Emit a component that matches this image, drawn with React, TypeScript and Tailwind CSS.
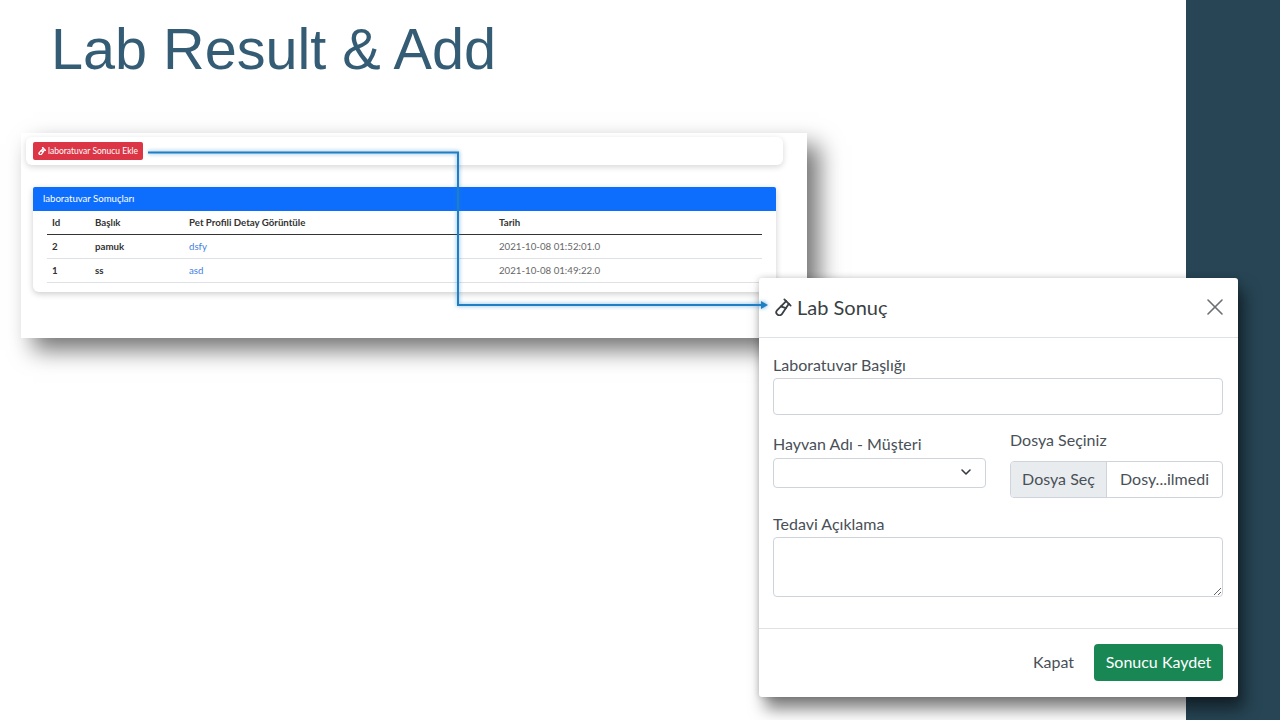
import { X, ChevronDown } from "lucide-react";

const rows = [
  { id: 2, title: "pamuk", link: "dsfy", date: "2021-10-08 01:52:01.0" },
  { id: 1, title: "ss", link: "asd", date: "2021-10-08 01:49:22.0" },
];

// tilted test tube, the picture's icon is not in lucide at this shape
const TubeIcon = ({ size, solid }: { size: number; solid?: boolean }) => {
  return (
    <svg width={size} height={size} viewBox="0 0 20 20" fill="none" stroke="currentColor" strokeWidth={solid ? 3.4 : 2} strokeLinecap="round" strokeLinejoin="round">
      <path d="M11.5 1.5L18.5 8.5" />
      <path d="M13.5 3.5L3.6 13.4a3.4 3.4 0 0 0 4.9 4.9L16.5 6.5" />
      <path d="M7.6 9.4L13.2 11.2" />
    </svg>
  );
};

const AppShot = () => {
  return (
    <div className="absolute left-[21px] top-[133px] h-[205px] w-[786px] bg-white pl-[5px] pr-[24px] pt-[4px] shadow-[12px_12px_22px_rgba(0,0,0,0.55)]">
      <div className="h-[28px] rounded-[6px] bg-white pl-[7px] pt-[5px] shadow-[0_2px_6px_rgba(0,0,0,0.16)]">
        <button className="flex h-[18px] w-[110px] items-center justify-center gap-[2px] rounded-[2px] bg-[#dc3545] text-[8.5px] text-white">
          <TubeIcon size={8} solid />
          laboratuvar Sonucu Ekle
        </button>
      </div>
      <div className="mx-[7px] mt-[22px] h-[105px] overflow-hidden rounded-b-[6px] rounded-t-[2px] bg-white shadow-[0_2px_6px_rgba(0,0,0,0.2)]">
        <div className="flex h-[24px] items-center bg-[#0d6efd] pl-[10px] text-[9.6px] text-white">
          laboratuvar Somuçları
        </div>
        <div className="px-[14px]">
          <table className="w-full table-fixed text-[9.7px] text-[#333]">
            <thead>
              <tr className="h-[23px] border-b border-[#333]">
                <th className="w-[48px] pl-[5px] text-left font-bold">Id</th>
                <th className="w-[94px] text-left font-bold">Başlık</th>
                <th className="w-[310px] text-left font-bold">Pet Profili Detay Görüntüle</th>
                <th className="text-left font-bold">Tarih</th>
              </tr>
            </thead>
            <tbody>
              {rows.map((r) => (
                <tr key={r.id} className="h-[24px] border-b border-[#dee2e6]">
                  <td className="pl-[5px] font-bold">{r.id}</td>
                  <td className="font-bold">{r.title}</td>
                  <td className="text-[#3f7fe0]">{r.link}</td>
                  <td className="text-[#666]">{r.date}</td>
                </tr>
              ))}
            </tbody>
          </table>
        </div>
      </div>
    </div>
  );
};

const Connector = () => {
  return (
    <svg className="absolute left-[140px] top-[140px] drop-shadow-[0_0_2px_rgba(31,127,196,0.7)]" width="640" height="180" viewBox="140 140 640 180" fill="none">
      <path d="M148 152.5H458V305H762" stroke="#1f7fc4" strokeWidth="2" />
      <path d="M761 301L768 305L761 309Z" fill="#1f7fc4" />
    </svg>
  );
};

const Modal = () => {
  return (
    <div className="absolute left-[759px] top-[278px] flex h-[419px] w-[479px] flex-col rounded-[3px] bg-white text-[16px] text-[#495057] shadow-[6px_12px_16px_rgba(0,0,0,0.5),0_0_6px_rgba(0,0,0,0.2)]">
      <div className="flex h-[60px] items-center justify-between border-b border-[#dee2e6] pb-[2px] pl-[15px] pr-[9px]">
        <div className="flex items-center gap-[5px] text-[20px] leading-[24px] text-[#3a3f44]">
          <TubeIcon size={18} />
          Lab Sonuç
        </div>
        <X size={28} strokeWidth={1.4} className="text-[#6c7075]" />
      </div>
      <div className="flex-1 pl-[14px] pr-[15px] pt-[17px]">
        <label className="mb-[1px] block h-[22px] leading-[20px]">Laboratuvar Başlığı</label>
        <input className="block h-[37px] w-full rounded-[4px] border border-[#ced4da] bg-white" />
        <div className="mt-[15px] grid grid-cols-2 gap-[24px]">
          <div className="pt-[4px]">
            <label className="mb-[2px] block h-[22px] leading-[20px]">Hayvan Adı - Müşteri</label>
            <div className="relative">
              <select className="block h-[30px] w-full appearance-none rounded-[4px] border border-[#ced4da] bg-white" />
              <ChevronDown size={16} strokeWidth={2.4} className="absolute right-[12px] top-[6px] text-[#343a40]" />
            </div>
          </div>
          <div>
            <label className="mb-[9px] block h-[22px] leading-[20px]">Dosya Seçiniz</label>
            <div className="flex h-[37px] overflow-hidden rounded-[4px] border border-[#ced4da]">
              <div className="flex w-[96px] items-center justify-center border-r border-[#ced4da] bg-[#e9ecef] pb-[2px]">Dosya Seç</div>
              <div className="flex flex-1 items-center justify-center pb-[2px]">Dosy...ilmedi</div>
            </div>
          </div>
        </div>
        <label className="mb-[2px] mt-[15px] block h-[22px] leading-[22px]">Tedavi Açıklama</label>
        <textarea className="block h-[60px] w-full resize-y rounded-[4px] border border-[#ced4da] bg-white" />
      </div>
      <div className="flex h-[69px] items-center justify-end gap-[20px] border-t border-[#dee2e6] pb-[1px] pl-[14px] pr-[15px]">
        <span className="pb-[2px]">Kapat</span>
        <button className="h-[37px] w-[129px] rounded-[4px] bg-[#198754] pb-[2px] text-white">Sonucu Kaydet</button>
      </div>
    </div>
  );
};

export default function App() {
  return (
    <div className="flex h-[720px] w-[1280px] overflow-hidden bg-white font-['Lato','Noto_Sans',sans-serif]">
      <div className="relative flex-1">
        <h1 className="pl-[51px] pt-[13px] font-['Liberation_Sans',Arial,sans-serif] text-[57.6px] leading-[72px] text-[#345d75]">
          Lab Result &amp; Add
        </h1>
        <AppShot />
        <div className="absolute inset-0 w-[1280px]">
          <Modal />
          <Connector />
        </div>
      </div>
      <div className="w-[94px] bg-[#274555]" />
    </div>
  );
}
